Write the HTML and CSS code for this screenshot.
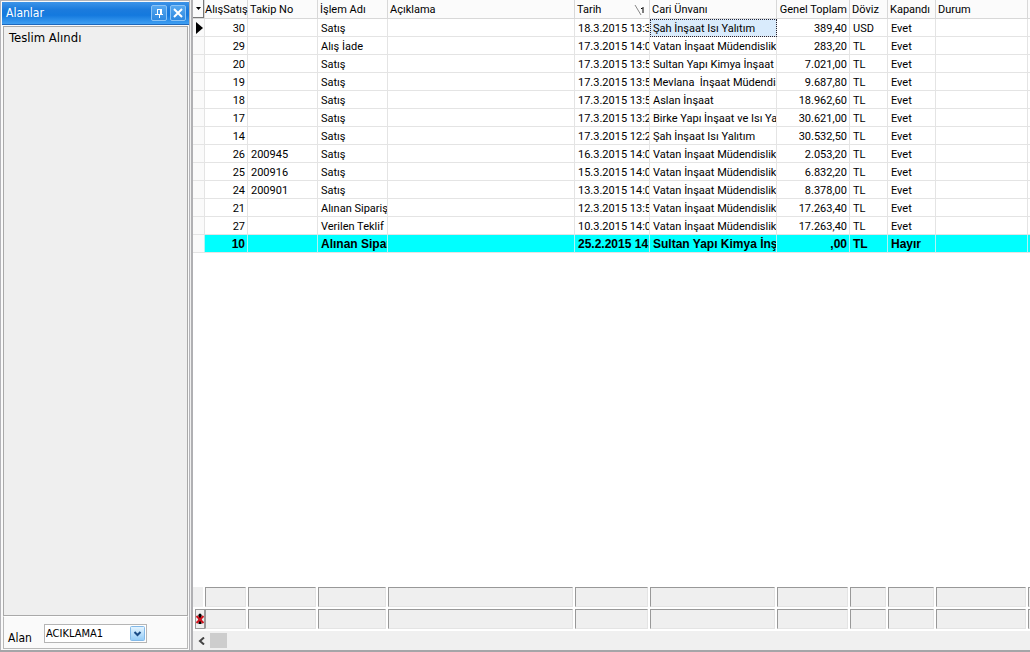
FILE: index.html
```html
<!DOCTYPE html>
<html lang="tr">
<head>
<meta charset="utf-8">
<title>Alanlar</title>
<link rel="stylesheet" href="styles.css">
</head>
<body>
<div class="app">
  <aside class="dock">
    <header class="dock-title">
      <span class="dock-name">Alanlar</span>
      <button class="title-btn" type="button" aria-label="Sabitle">
        <svg width="14" height="14" viewBox="0 0 14 14" fill="none" stroke="#fff"><path d="M5.500 8V3.500H9M3 8.500h8M7.500 9v3M5 3.500h5"/><path d="M9 3v5" stroke-width="2"/></svg>
      </button>
      <button class="title-btn" type="button" aria-label="Kapat">
        <svg width="14" height="14" viewBox="0 0 14 14" fill="none" stroke="#fff" stroke-width="2"><path d="M3 3l8 8M11 3l-8 8"/></svg>
      </button>
    </header>
    <div class="field-list">Teslim Alındı</div>
    <div class="field-bar">
      <label class="field-label" for="alan">Alan</label>
      <span class="combo">
        <select id="alan" class="combo-select"><option>ACIKLAMA1</option></select>
        <svg class="combo-arrow" width="15" height="15" viewBox="0 0 15 15"><defs><linearGradient id="g" x2="0" y2="1"><stop stop-color="#e6f5ff"/><stop offset="1" stop-color="#92cbf7"/></linearGradient></defs><rect x=".5" y=".5" width="14" height="14" rx="1" fill="url(#g)" stroke="#83b9e8"/><path d="M4.500 6l3 3 3-3" fill="none" stroke="#1b4c86" stroke-width="2"/></svg>
      </span>
    </div>
  </aside>
  <main class="grid">
    <div class="grid-body">
      <table class="records">
        <colgroup><col class="c-mark"><col class="c-id"><col class="c-mid"><col class="c-mid"><col class="c-note"><col class="c-date"><col class="c-name"><col class="c-sum"><col class="c-cur"><col class="c-closed"><col><col class="c-end"></colgroup>
        <thead>
          <tr><th class="corner"><button class="corner-btn" type="button" aria-label="Sütunlar"><svg width="5" height="3" viewBox="0 0 5 3"><path d="M0 0h5L2.500 3z"/></svg></button></th><th class="tight">AlışSatış</th><th>Takip No</th><th>İşlem Adı</th><th>Açıklama</th><th><span class="sorted">Tarih <svg width="11" height="10" viewBox="0 0 11 10" fill="none"><path d="M1 0l6 10" stroke="#888"/><path d="M7 3.500h1.500M9 2v6" stroke="#000"/></svg></span></th><th>Cari Ünvanı</th><th class="num">Genel Toplam</th><th>Döviz</th><th>Kapandı</th><th>Durum</th><th></th></tr>
        </thead>
        <tbody>
          <tr><td class="mark"><svg width="7" height="12" viewBox="0 0 7 12"><path d="M0 0v12l7-6z"/></svg></td><td class="num">30</td><td></td><td>Satış</td><td></td><td>18.3.2015 13:35</td><td class="focused">Şah İnşaat Isı Yalıtım</td><td class="num">389,40</td><td>USD</td><td>Evet</td><td></td><td></td></tr>
          <tr><td class="mark"></td><td class="num">29</td><td></td><td>Alış İade</td><td></td><td>17.3.2015 14:00</td><td>Vatan İnşaat Müdendislik</td><td class="num">283,20</td><td>TL</td><td>Evet</td><td></td><td></td></tr>
          <tr><td class="mark"></td><td class="num">20</td><td></td><td>Satış</td><td></td><td>17.3.2015 13:55</td><td>Sultan Yapı Kimya İnşaat San</td><td class="num">7.021,00</td><td>TL</td><td>Evet</td><td></td><td></td></tr>
          <tr><td class="mark"></td><td class="num">19</td><td></td><td>Satış</td><td></td><td>17.3.2015 13:55</td><td>Mevlana&nbsp; İnşaat Müdendislik</td><td class="num">9.687,80</td><td>TL</td><td>Evet</td><td></td><td></td></tr>
          <tr><td class="mark"></td><td class="num">18</td><td></td><td>Satış</td><td></td><td>17.3.2015 13:55</td><td>Aslan İnşaat</td><td class="num">18.962,60</td><td>TL</td><td>Evet</td><td></td><td></td></tr>
          <tr><td class="mark"></td><td class="num">17</td><td></td><td>Satış</td><td></td><td>17.3.2015 13:25</td><td>Birke Yapı İnşaat ve Isı Yalıtım</td><td class="num">30.621,00</td><td>TL</td><td>Evet</td><td></td><td></td></tr>
          <tr><td class="mark"></td><td class="num">14</td><td></td><td>Satış</td><td></td><td>17.3.2015 12:25</td><td>Şah İnşaat Isı Yalıtım</td><td class="num">30.532,50</td><td>TL</td><td>Evet</td><td></td><td></td></tr>
          <tr><td class="mark"></td><td class="num">26</td><td>200945</td><td>Satış</td><td></td><td>16.3.2015 14:00</td><td>Vatan İnşaat Müdendislik</td><td class="num">2.053,20</td><td>TL</td><td>Evet</td><td></td><td></td></tr>
          <tr><td class="mark"></td><td class="num">25</td><td>200916</td><td>Satış</td><td></td><td>15.3.2015 14:00</td><td>Vatan İnşaat Müdendislik</td><td class="num">6.832,20</td><td>TL</td><td>Evet</td><td></td><td></td></tr>
          <tr><td class="mark"></td><td class="num">24</td><td>200901</td><td>Satış</td><td></td><td>13.3.2015 14:00</td><td>Vatan İnşaat Müdendislik</td><td class="num">8.378,00</td><td>TL</td><td>Evet</td><td></td><td></td></tr>
          <tr><td class="mark"></td><td class="num">21</td><td></td><td>Alınan Sipariş</td><td></td><td>12.3.2015 13:55</td><td>Vatan İnşaat Müdendislik</td><td class="num">17.263,40</td><td>TL</td><td>Evet</td><td></td><td></td></tr>
          <tr><td class="mark"></td><td class="num">27</td><td></td><td>Verilen Teklif</td><td></td><td>10.3.2015 14:00</td><td>Vatan İnşaat Müdendislik</td><td class="num">17.263,40</td><td>TL</td><td>Evet</td><td></td><td></td></tr>
          <tr class="open"><td class="mark"></td><td class="num">10</td><td></td><td>Alınan Sipariş</td><td></td><td>25.2.2015 14:00</td><td>Sultan Yapı Kimya İnşaat</td><td class="num">,00</td><td>TL</td><td>Hayır</td><td></td><td></td></tr>
        </tbody>
      </table>
    </div>
    <div class="totals">
      <i class="stub"></i><i></i><i></i><i></i><i></i><i></i><i></i><i></i><i></i><i></i><i></i><i></i>
    </div>
    <div class="totals">
      <button class="filter-btn" type="button" aria-label="Filtreyi temizle"><svg width="8" height="12" viewBox="0 0 8 12"><circle cx="4" cy="2" r="1.500"/><path d="M4 2v9" stroke="#000" stroke-width="3"/><path d="M.5 3l7 7M7.500 3l-7 7" stroke="#d0141e" stroke-width="2"/></svg></button><i></i><i></i><i></i><i></i><i></i><i></i><i></i><i></i><i></i><i></i><i></i>
    </div>
    <div class="scroller">
      <button class="scroll-btn" type="button" aria-label="Sola kaydır"><svg width="8" height="8" viewBox="0 0 8 8" fill="none" stroke="#444" stroke-width="2"><path d="M6 0.500L2 4l4 3.500"/></svg></button>
      <span class="thumb"></span>
    </div>
  </main>
</div>
</body>
</html>
```
FILE: styles.css
```css
* { box-sizing: border-box; }
body { margin: 0; background: #fff; color: #000; font: 11px/14px Roboto, "Liberation Sans", Arial, sans-serif; }
button { padding: 0; margin: 0; border: 0; background: none; }
svg { display: block; }
.app { display: flex; height: 100vh; border-bottom: 2px solid #a5a5a8; background: #f0f0f0; }

.dock { display: flex; flex-direction: column; width: 190px; flex: none; border: 1px solid #b4b4b8; border-bottom: 0; padding: 1px 0 0 1px; background: #fafafa; font-family: "DejaVu Sans Condensed", "DejaVu Sans", sans-serif; }
.dock-title { display: flex; align-items: center; gap: 3px; height: 23px; padding: 0 3px 0 4px; background: linear-gradient(#3d94e8, #1b7bdd 35%, #1479de 60%, #3f9ff2); border-bottom: 1px solid #1d68bd; color: #fff; font-size: 12px; }
.dock-name { flex: 1; }
.title-btn { display: grid; place-items: center; width: 16px; height: 16px; border: 1px solid #8cc4f6; border-radius: 2px; background: linear-gradient(#56a8f0, #2d88e0); }
.field-list { flex: 1; margin: 1px 1px 0; padding: 3px 5px; border: 1px solid #a9a9a9; background: #efefef; font-size: 13px; line-height: 16px; }
.field-bar { display: flex; align-items: flex-start; height: 33px; margin: 0 1px 1px; padding: 7px 4px 0; border: 1px solid #b8b8b8; border-top-color: #fff; }
.field-label { width: 36px; padding-top: 7px; font-size: 12px; }
.combo { display: grid; align-items: center; width: 103px; height: 19px; border: 1px solid #b5b5b5; background: #fff; }
.combo > * { grid-area: 1 / 1; }
.combo-select { appearance: none; width: 100%; height: 17px; padding: 0 0 0 1px; border: 0; background: #fff; color: #000; font: 11px/15px "DejaVu Sans Condensed", "DejaVu Sans", sans-serif; }
.combo-arrow { justify-self: end; margin-right: 1px; pointer-events: none; }

.grid { display: flex; flex: 1; flex-direction: column; min-width: 0; margin-left: 1px; border-left: 2px solid #b0b0b3; background: #fff; }
.grid-body { flex: 1; min-height: 0; overflow: hidden; }
.records { width: 100%; table-layout: fixed; border-collapse: separate; border-spacing: 0; }
.c-mark { width: 12px; }
.c-id { width: 43px; }
.c-mid { width: 70px; }
.c-note { width: 187px; }
.c-date { width: 75px; }
.c-name { width: 127px; }
.c-sum { width: 73px; }
.c-cur { width: 38px; }
.c-closed { width: 48px; }
.c-end { width: 2px; }
.records th, .records td { height: 18px; padding: 3px 0 0 3px; overflow: hidden; white-space: nowrap; text-align: left; font-weight: normal; border-right: 1px solid #e4e4e4; border-bottom: 1px solid #e4e4e4; }
.records th { height: 19px; padding: 3px 0 1px 2px; background: #fbfbfb; border-color: #d8d8d8; }
.records th:last-child, .records td:last-child { padding: 0; border-right: 0; }
.records .num { text-align: right; padding-right: 2px; padding-left: 0; }
.records .tight { padding-left: 0; overflow: visible; }
.records .corner { padding: 0; }
.corner-btn { display: grid; place-items: center; width: 100%; height: 18px; border-right: 1px solid #777; border-bottom: 1px solid #777; }
.records .mark { padding: 0 0 0 3px; background: #fafafa; }
.sorted { display: flex; align-items: center; justify-content: space-between; padding-right: 4px; }
.records .focused { background: #d9ebfc; outline: 1px dotted #223; outline-offset: -1px; }
.records .open td { padding-top: 2px; padding-bottom: 1px; background: #0ff; border-right-color: #b0f4f4; font-weight: bold; font-size: 12px; font-family: "Liberation Sans", Arial, sans-serif; }
.records .open .mark { background: #fafafa; }

.totals { display: grid; grid-template-columns: 12px 43px 70px 70px 187px 75px 127px 73px 38px 48px 1fr 2px; height: 22px; background: #fff; }
.totals i { margin: 0 2px 2px 0; border: 1px solid #989898; border-right-color: #e4e4e4; border-bottom-color: #e4e4e4; background: #efefef; }
.totals i:last-child { margin-right: 0; border-right: 0; }
.totals .stub { border-color: #efefef; }
.filter-btn { display: grid; place-items: center; width: 10px; height: 20px; margin-left: 2px; border: 1px solid #999; background: #eee; }
.scroller { display: flex; height: 19px; padding: 1px 0; background: #f0f0f0; }
.scroll-btn { display: grid; place-items: center; width: 17px; }
.thumb { width: 17px; height: 15px; margin-top: 1px; background: #cdcdcd; }
```
